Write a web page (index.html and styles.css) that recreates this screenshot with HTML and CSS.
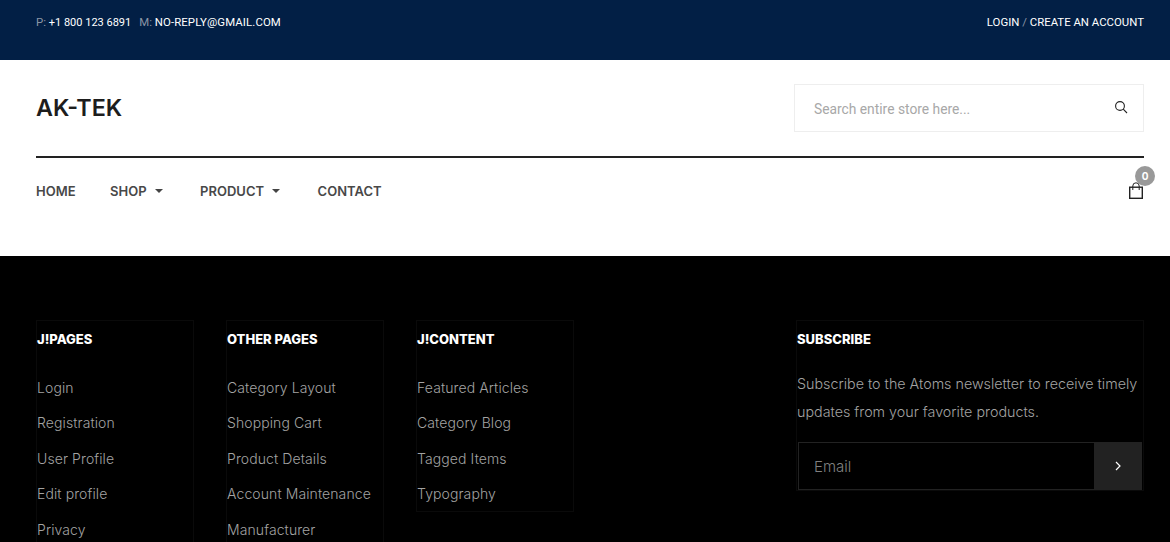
FILE: index.html
```html
<!DOCTYPE html>
<html lang="en">
<head>
<meta charset="utf-8">
<title>AK-TEK</title>
<link rel="stylesheet" href="styles.css">
</head>
<body>
<div class="topbar">
  <div class="contact"><span class="label">P:</span> <a class="phone">+1 800 123 6891</a><span class="label second">M:</span> <a class="mail">NO-REPLY@GMAIL.COM</a></div>
  <div class="account"><a>LOGIN</a> <span class="label">/</span> <a>CREATE AN ACCOUNT</a></div>
</div>
<header class="header">
  <div class="brand-row">
    <div class="logo">AK-TEK</div>
    <div class="search">
      <span class="placeholder">Search entire store here...</span>
      <svg class="search-icon" width="14" height="14" viewBox="0 0 14 14" fill="none" stroke="#222" stroke-width="1.1"><circle cx="6" cy="6" r="4.4"/><path d="M9.2 9.2 13 13"/></svg>
    </div>
  </div>
  <nav class="nav">
    <ul class="menu">
      <li class="item">HOME</li>
      <li class="item caret">SHOP</li>
      <li class="item caret">PRODUCT</li>
      <li class="item">CONTACT</li>
    </ul>
    <div class="cart">
      <svg width="16" height="18" viewBox="0 0 16 18" fill="none" stroke="#222" stroke-width="1.4"><rect x="1.7" y="5.2" width="12.6" height="11.1"/><path d="M4.8 8V4a3.2 3.2 0 0 1 6.4 0V8" stroke-width="1"/></svg>
      <span class="badge">0</span>
    </div>
  </nav>
</header>
<footer class="footer">
  <div class="col">
    <h3 class="col-title">J!PAGES</h3>
    <ul class="links"><li>Login</li><li>Registration</li><li>User Profile</li><li>Edit profile</li><li>Privacy</li></ul>
  </div>
  <div class="col">
    <h3 class="col-title">OTHER PAGES</h3>
    <ul class="links"><li>Category Layout</li><li>Shopping Cart</li><li>Product Details</li><li>Account Maintenance</li><li>Manufacturer</li></ul>
  </div>
  <div class="col">
    <h3 class="col-title">J!CONTENT</h3>
    <ul class="links"><li>Featured Articles</li><li>Category Blog</li><li>Tagged Items</li><li>Typography</li></ul>
  </div>
  <div class="col subscribe">
    <h3 class="col-title">SUBSCRIBE</h3>
    <p class="sub-text">Subscribe to the Atoms newsletter to receive timely updates from your favorite products.</p>
    <div class="sub-form">
      <span class="email">Email</span>
      <span class="sub-btn"><svg width="8" height="10" viewBox="0 0 8 10" fill="none" stroke="#fff" stroke-width="1.2"><path d="M2 1l4 4-4 4"/></svg></span>
    </div>
  </div>
</footer>
</body>
</html>
```
FILE: styles.css
```css
* { box-sizing: border-box; }
html, body { margin: 0; padding: 0; height: 542px; overflow: hidden; background: #000; }
body { font-family: "Inter", "Liberation Sans", sans-serif; }
ul { list-style: none; margin: 0; padding: 0; }

.topbar {
  height: 60px;
  background: #021f45;
  padding: 15px 26px 0 36px;
  display: flex;
  justify-content: space-between;
  font-family: "Roboto", sans-serif;
  font-size: 11.4px;
  line-height: 14px;
  color: #fff;
}
.label { color: #8b96a5; }
.phone { font-size: 11px; }
.mail { letter-spacing: 0.1px; }
.second { margin-left: 8px; }

.header { height: 196px; background: #fff; padding: 24px 26px 0 36px; }
.brand-row {
  display: flex;
  justify-content: space-between;
  height: 74px;
  border-bottom: 2px solid #222;
}
.logo {
  font-family: "Inter", sans-serif;
  font-size: 23.3px;
  font-weight: 600;
  line-height: 48px;
  color: #1d1d1d;
}
.search {
  width: 350px;
  height: 48px;
  border: 1px solid #eee;
  padding: 0 15px 0 19px;
  display: flex;
  align-items: center;
  justify-content: space-between;
}
.placeholder { font-family: "Roboto", sans-serif; font-size: 13.8px; line-height: 20px; margin-top: 2px; color: #a8a8a8; }
.search-icon { margin-top: -2px; }

.nav { display: flex; justify-content: space-between; padding-top: 24px; }
.menu { display: flex; font-size: 13px; font-weight: 600; line-height: 16px; color: #484848; }
.item { margin-right: 33px; display: flex; align-items: center; }
.item:first-child { margin-right: 34.5px; }
.caret { margin-right: 37.5px; }
.caret::after {
  content: "";
  margin-left: 8px;
  border-top: 4px solid #444;
  border-left: 4px solid transparent;
  border-right: 4px solid transparent;
}
.cart { position: relative; width: 16px; height: 18px; }
.badge {
  position: absolute;
  top: -16px;
  left: 7px;
  width: 20px;
  height: 20px;
  border-radius: 50%;
  background: #999;
  color: #fff;
  font-size: 10px;
  font-weight: 700;
  line-height: 20px;
  text-align: center;
}

.footer {
  height: 286px;
  overflow: hidden;
  background: #000;
  padding: 64px 26px 0 36px;
  display: grid;
  grid-template-columns: repeat(6, 158px);
  column-gap: 32px;
  align-items: start;
}
.col { border: 1px solid #0a0a0a; }
.subscribe { grid-column: 5 / 7; }
.col-title {
  margin: 0 0 31px;
  padding-top: 10px;
  font-size: 13px;
  line-height: 16px;
  font-weight: 800;
  color: #fff;
}
.links { font-size: 14px; letter-spacing: 0.1px; line-height: 20px; font-weight: 300; color: #a3a3a3; }
.links li { margin-bottom: 15.4px; }
.links li:last-child { margin-bottom: 7px; }
.sub-text { margin: -8px 0 16px; font-size: 14.3px; line-height: 28px; font-weight: 300; color: #a3a3a3; }
.sub-form {
  display: flex;
  height: 48px;
  width: 344px;
  margin-left: 1px;
  border: 1px solid #222;
}
.email { flex: 1; padding-left: 15px; font-size: 15px; font-weight: 300; line-height: 47px; color: #808080; }
.sub-btn { width: 48px; margin: -1px -1px -1px 0; background: #222; display: flex; align-items: center; justify-content: center; }
```
